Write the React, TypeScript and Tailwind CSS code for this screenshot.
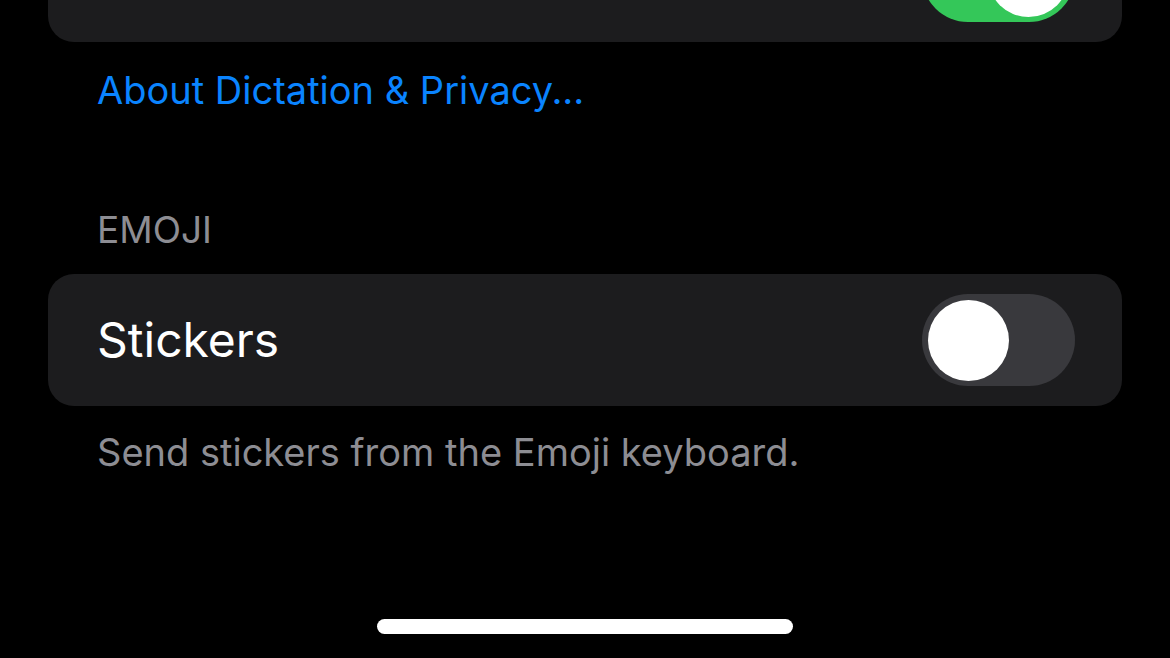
import React from "react";

interface ToggleProps {
  on: boolean;
}

const Toggle: React.FC<ToggleProps> = ({ on }) => {
  return (
    <div
      className={`flex h-[92px] w-[153px] items-center rounded-full px-[6px] ${
        on ? "justify-end bg-[#34c759]" : "justify-start bg-[#39393d]"
      }`}
    >
      <div className="h-[81px] w-[81px] rounded-full bg-white" />
    </div>
  );
};

const App: React.FC = () => {
  return (
    <div
      className="relative h-[658px] w-[1170px] overflow-hidden bg-black px-[48px]"
      style={{ fontFamily: "Inter, 'Noto Sans', sans-serif" }}
    >
      {/* Dictation card (cut off at top) */}
      <div className="-mt-[90px] flex h-[132px] items-center justify-end rounded-[26px] bg-[#1c1c1e] pr-[47px]">
        <Toggle on={true} />
      </div>

      <p className="mt-[26px] pl-[49px] text-[38px] leading-[44px] text-[#0a84ff]">
        About Dictation &amp; Privacy...
      </p>

      {/* Emoji section */}
      <p className="mt-[97px] pl-[49px] text-[37px] leading-[42px] text-[#8d8d93]">EMOJI</p>

      <div className="mt-[23px] flex h-[132px] items-center justify-between rounded-[26px] bg-[#1c1c1e] pl-[49px] pr-[47px]">
        <span className="text-[48px] leading-[60px] text-white">Stickers</span>
        <Toggle on={false} />
      </div>

      <p className="mt-[24px] pl-[49px] text-[38px] leading-[44px] text-[#8d8d93]">
        Send stickers from the Emoji keyboard.
      </p>

      {/* Home indicator */}
      <div className="absolute bottom-[24px] left-[377px] h-[15px] w-[416px] rounded-full bg-white" />
    </div>
  );
};

export default App;
